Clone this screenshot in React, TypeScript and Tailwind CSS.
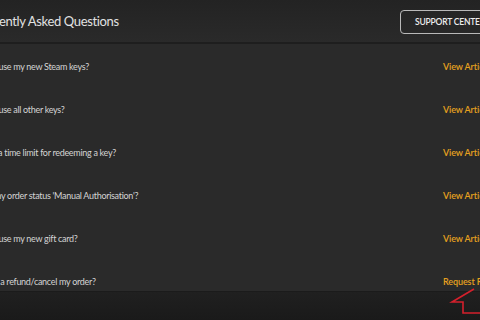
import React from 'react';

interface Faq {
    question: string;
    action: string;
}

const faqs: Faq[] = [
    { question: 'How to use my new Steam keys?', action: 'View Article' },
    { question: 'How to use all other keys?', action: 'View Article' },
    { question: 'Is there a time limit for redeeming a key?', action: 'View Article' },
    { question: "Why's my order status 'Manual Authorisation'?", action: 'View Article' },
    { question: 'How to use my new gift card?', action: 'View Article' },
    { question: 'Do I get a refund/cancel my order?', action: 'Request Refund' },
];

const App: React.FC = () => {
    return (
        <div
            className="w-[480px] h-[320px] overflow-hidden bg-[#2a2a2a] flex flex-col relative"
            style={{ fontFamily: 'Lato, "Open Sans", sans-serif' }}
        >
            <div className="w-[591px] -ml-[31px] flex flex-col flex-1">
                {/* header */}
                <div className="h-[44px] shrink-0 flex items-center justify-between pr-[60px] pt-[2px] bg-gradient-to-b from-[#232323] to-[#2a2a2a] border-b-2 border-[#1e1e1e]">
                    <h2 className="text-[13px] tracking-[-0.35px] text-[#e2e2e2] -ml-[1px]">Frequently Asked Questions</h2>
                    <button className="h-[24px] px-[14px] border border-[#b9b9b9] rounded-[4px] text-[8.5px] tracking-[-0.2px] text-[#eeeeee] font-semibold whitespace-nowrap">
                        SUPPORT CENTER
                    </button>
                </div>

                {/* questions */}
                <div className="h-[246px] overflow-hidden pr-[60px] pt-[1px]">
                    {faqs.map(faq => (
                        <div key={faq.question} className="h-[43px] flex items-center justify-between">
                            <span className="text-[9px] tracking-[-0.3px] text-[#d4d4d4] whitespace-nowrap">{faq.question}</span>
                            <a href="#" className="text-[9px] tracking-[-0.1px] font-semibold text-[#e6a11f] w-[57px] whitespace-nowrap">
                                {faq.action}
                            </a>
                        </div>
                    ))}
                </div>
            </div>

            {/* bottom bar */}
            <div className="h-[29px] shrink-0 bg-gradient-to-b from-[#202020] to-[#1a1a1a] border-t border-[#1b1b1b]" />

            {/* red arrow annotation */}
            <svg className="absolute left-[448px] top-[284px]" width="40" height="36" viewBox="0 0 40 36">
                <path
                    d="M26 5 L4 18 L15 18 L15 29 L40 29"
                    fill="none"
                    stroke="#d4202c"
                    strokeWidth="1.6"
                    strokeLinejoin="miter"
                />
            </svg>
        </div>
    );
};

export default App;
